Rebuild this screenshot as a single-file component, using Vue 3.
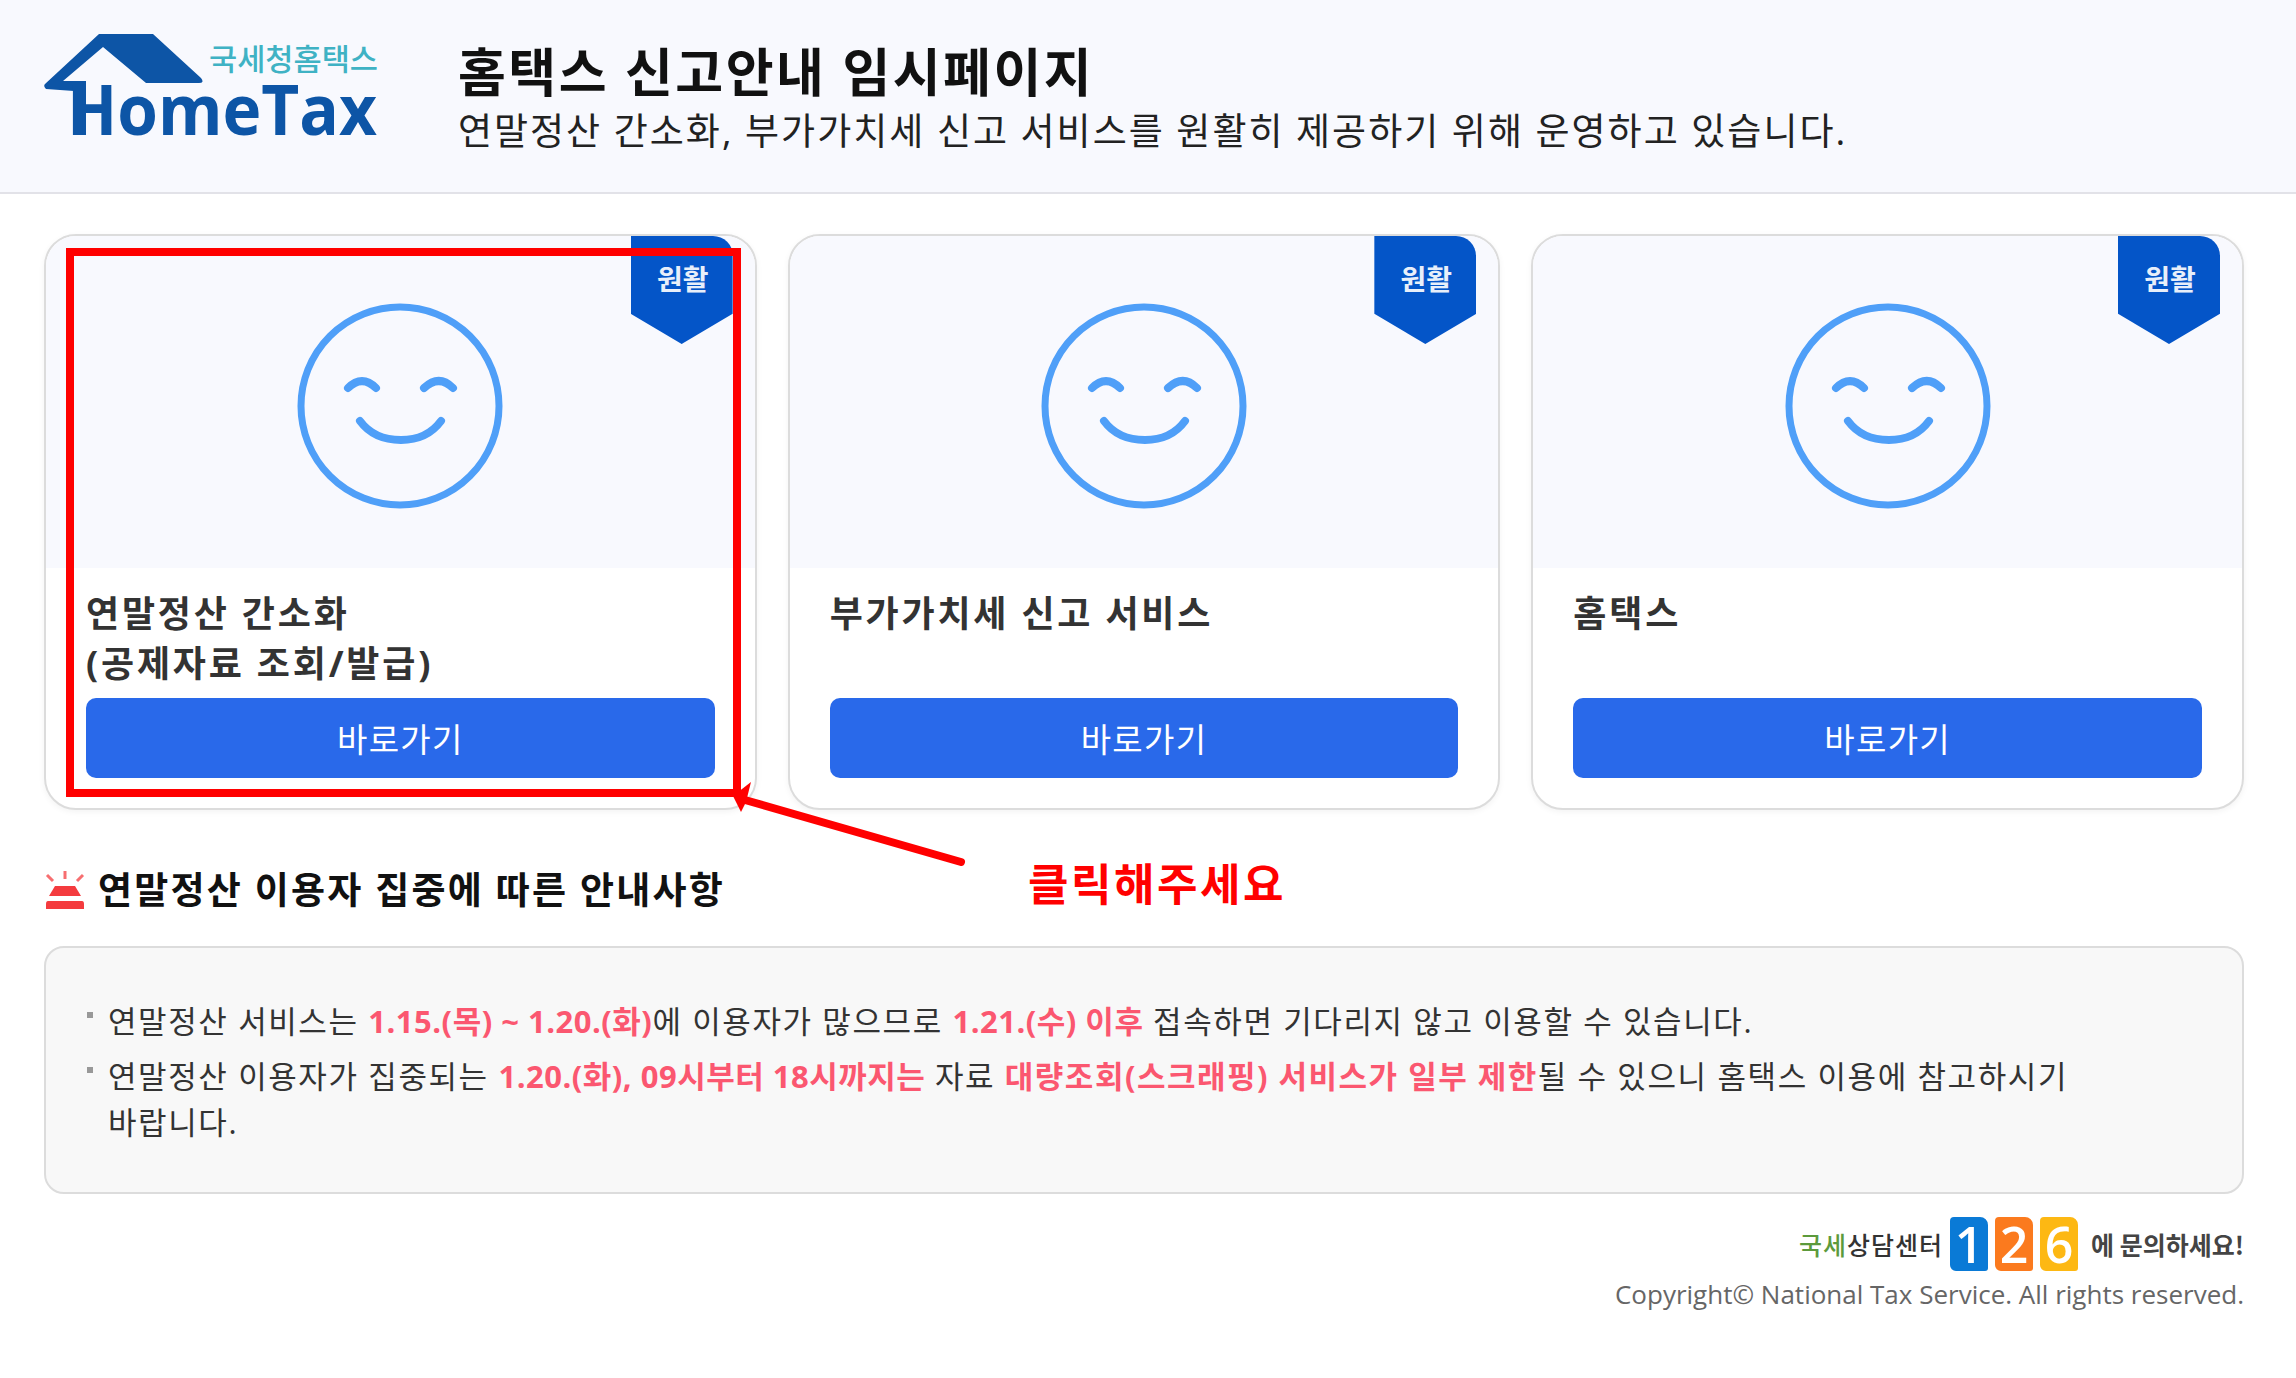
<template>
  <div class="page">
    <!-- 상단 헤더 -->
    <header class="top">
      <svg class="logo" width="350" height="110" viewBox="0 0 350 110">
        <path d="M55 1H109L157 45Q161 50 155 50H102L59 14L19 48H42V102H30V58L2 56Q-1 53 1 51Z" fill="#0d55a6" />
        <text x="165" y="37" class="logo-ko" textLength="169" lengthAdjust="spacingAndGlyphs">국세청홈택스</text>
        <text x="23" y="102" class="logo-en" textLength="310" lengthAdjust="spacingAndGlyphs">HomeTax</text>
      </svg>
      <div class="top-text">
        <h1>홈택스 신고안내 임시페이지</h1>
        <p>연말정산 간소화, 부가가치세 신고 서비스를 원활히 제공하기 위해 운영하고 있습니다.</p>
      </div>
    </header>

    <main class="content">
      <div class="cards">
        <section v-for="card in cards" :key="card.id" class="card">
          <div class="card-visual">
            <span class="ribbon">원활</span>
            <svg class="face" width="208" height="208" viewBox="0 0 208 208" fill="none" stroke="#4f9ff8" stroke-linecap="round">
              <circle cx="104" cy="103" r="99" stroke-width="7" />
              <path d="M52 85Q66 71 80 85" stroke-width="8" />
              <path d="M128 85Q143 71 157 85" stroke-width="8" />
              <path d="M64 118Q78 137 105 137Q131 137 145 118" stroke-width="8" />
            </svg>
          </div>
          <div class="card-body">
            <h2>{{ card.title }}<br v-if="card.sub" />{{ card.sub }}</h2>
            <button class="go">바로가기</button>
          </div>
        </section>
      </div>

      <h3 class="notice-title">
        <svg width="42" height="38" viewBox="0 0 42 38">
          <path d="M21 0V8M3 4L9 10M39 4L33 10" stroke="#f76e70" stroke-width="3" fill="none" />
          <path d="M11 15H31L37 25H5Z" fill="#f43b3e" />
          <path d="M4 30H38Q40 30 40 33V38H2V33Q2 30 4 30Z" fill="#f43b3e" />
        </svg>
        연말정산 이용자 집중에 따른 안내사항
      </h3>

      <div class="notice">
        <ul>
          <li>연말정산 서비스는 <b>1.15.(목) ~ 1.20.(화)</b>에 이용자가 많으므로 <b>1.21.(수) 이후</b> 접속하면 기다리지 않고 이용할 수 있습니다.</li>
          <li>연말정산 이용자가 집중되는 <b>1.20.(화), 09시부터 18시까지는</b> 자료 <b class="wide">대량조회(스크래핑) 서비스가 일부 제한</b>될 수 있으니 홈택스 이용에 참고하시기 바랍니다.</li>
        </ul>
      </div>

      <footer class="foot">
        <div class="call">
          <span class="call-name"><i>국세</i>상담센터</span>
          <span class="num blue">1</span>
          <span class="num orange">2</span>
          <span class="num yellow">6</span>
          <span class="call-text">에 문의하세요!</span>
        </div>
        <p class="copy">Copyright© National Tax Service. All rights reserved.</p>
      </footer>
    </main>

    <!-- 빨간 표시 -->
    <div class="mark"></div>
    <svg class="arrow" width="240" height="90" viewBox="0 0 240 90">
      <path d="M230 72L14 10" stroke="#f00" stroke-width="8" stroke-linecap="round" fill="none" />
      <path d="M2 6L20 -8L15 12L10 22Z" fill="#f00" />
    </svg>
    <span class="hint">클릭해주세요</span>
  </div>
</template>

<script setup>
const cards = [
  { id: 1, title: '연말정산 간소화', sub: '(공제자료 조회/발급)' },
  { id: 2, title: '부가가치세 신고 서비스' },
  { id: 3, title: '홈택스' }
]
</script>

<style>
html,
body {
  margin: 0;
  background: #fff;
}
</style>

<style scoped>
.page {
  position: relative;
  min-height: 1378px;
  font-family: "Open Sans", "Noto Sans CJK KR", sans-serif;
  color: #222;
}

.top {
  display: flex;
  align-items: flex-start;
  height: 194px;
  box-sizing: border-box;
  padding: 33px 0 0 44px;
  background: #f8f9fe;
  border-bottom: 2px solid #e2e2e8;
}

.logo {
  flex: none;
  overflow: visible;
}

.logo-ko {
  font-family: "Noto Sans CJK KR", sans-serif;
  font-size: 30px;
  font-weight: 500;
  fill: #3fb2c4;
}

.logo-en {
  font-family: "Open Sans", sans-serif;
  font-size: 70px;
  font-weight: 700;
  fill: #0d55a6;
}

.top-text {
  margin-left: 64px;
  padding-top: 5px;
}

.top-text h1 {
  margin: 0;
  font-size: 52px;
  line-height: 67px;
  letter-spacing: 2.5px;
  font-weight: 700;
  color: #111;
}

.top-text p {
  margin: 0;
  font-size: 37px;
  line-height: 52px;
  letter-spacing: 2px;
  color: #222;
}

.content {
  padding: 40px 52px 0 44px;
}

.cards {
  display: grid;
  grid-template-columns: repeat(3, 1fr);
  gap: 31px;
}

.card {
  display: flex;
  flex-direction: column;
  height: 576px;
  box-sizing: border-box;
  border: 2px solid #dcdcdc;
  border-radius: 32px;
  overflow: hidden;
  background: #fff;
  box-shadow: 0 2px 6px rgba(0, 0, 0, 0.05);
}

.card-visual {
  position: relative;
  flex: none;
  display: flex;
  justify-content: center;
  height: 332px;
  padding-top: 67px;
  box-sizing: border-box;
  background: #f8f9fe;
}

.ribbon {
  position: absolute;
  top: 0;
  right: 22px;
  width: 102px;
  height: 108px;
  padding-top: 23px;
  padding-left: 2px;
  box-sizing: border-box;
  text-align: center;
  font-size: 28px;
  line-height: 40px;
  font-weight: 700;
  color: #e8effa;
  background: #0455c8;
  border-top-right-radius: 20px;
  clip-path: polygon(0 0, 100% 0, 100% 72%, 50% 100%, 0 72%);
}

.card-body {
  flex: 1;
  display: flex;
  flex-direction: column;
  justify-content: space-between;
  padding: 21px 40px 30px 40px;
}

.card-body h2 {
  margin: 0;
  font-size: 36px;
  line-height: 50px;
  letter-spacing: 2.8px;
  font-weight: 700;
  color: #333;
}

.go {
  height: 80px;
  border: 0;
  border-radius: 10px;
  background: #2969ea;
  color: #fff;
  font-family: inherit;
  font-size: 33px;
  letter-spacing: 1.3px;
}

.notice-title {
  display: flex;
  align-items: center;
  gap: 12px;
  margin: 55px 0 0;
  height: 50px;
  font-size: 37px;
  line-height: 50px;
  letter-spacing: 2.2px;
  font-weight: 700;
  color: #111;
}

.notice {
  margin-top: 31px;
  height: 248px;
  padding: 50px 60px 0 41px;
  box-sizing: border-box;
  border: 2px solid #dcdcdc;
  border-radius: 20px;
  background: #f8f8f8;
}

.notice ul {
  margin: 0;
  padding: 0;
  list-style: none;
}

.notice li {
  position: relative;
  padding-left: 21px;
  margin-bottom: 9px;
  font-size: 31px;
  line-height: 46px;
  letter-spacing: 1.6px;
  word-break: keep-all;
  color: #333;
}

.notice li::before {
  content: "";
  position: absolute;
  left: 0;
  top: 14px;
  width: 6px;
  height: 6px;
  background: #999;
}

.notice b {
  color: #fb5770;
  font-weight: 700;
  letter-spacing: 0.5px;
}

.notice b.wide {
  letter-spacing: 1.5px;
}

.foot {
  text-align: right;
}

.call {
  display: flex;
  justify-content: flex-end;
  align-items: center;
  height: 56px;
  margin-top: 22px;
}

.call-name {
  font-size: 25px;
  font-weight: 500;
  letter-spacing: 1px;
  color: #333;
  margin-right: 7px;
}

.call-name i {
  font-style: normal;
  color: #5c9a3c;
}

.num {
  width: 38px;
  height: 54px;
  margin-right: 7px;
  border-radius: 4px 8px 3px 6px;
  color: #fff;
  font-family: "Open Sans", sans-serif;
  font-size: 50px;
  font-weight: 600;
  line-height: 54px;
  text-align: center;
}

.blue {
  background: #0a7ad6;
}

.orange {
  background: #fb7a1e;
}

.yellow {
  margin-right: 0;
  background: #fdb813;
}

.call-text {
  margin-left: 13px;
  font-family: "Noto Sans CJK KR", sans-serif;
  font-size: 25px;
  font-weight: 700;
  color: #444;
}

.copy {
  margin: 4px 0 0;
  font-size: 26px;
  line-height: 36px;
  color: #666;
}

.mark {
  position: absolute;
  left: 66px;
  top: 248px;
  width: 675px;
  height: 549px;
  box-sizing: border-box;
  border: 8px solid #f00;
}

.arrow {
  position: absolute;
  left: 731px;
  top: 790px;
  overflow: visible;
}

.hint {
  position: absolute;
  left: 1028px;
  top: 852px;
  font-family: "Noto Sans CJK KR", sans-serif;
  font-size: 44px;
  line-height: 60px;
  letter-spacing: 2.5px;
  font-weight: 700;
  color: #f00;
}
</style>
